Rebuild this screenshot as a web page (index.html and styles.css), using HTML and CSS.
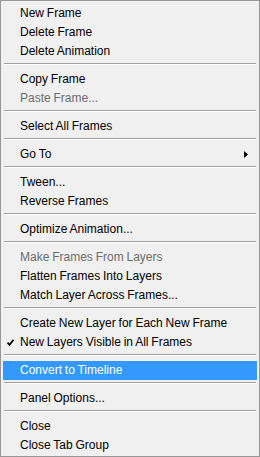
FILE: index.html
```html
<!DOCTYPE html>
<html lang="en">
<head>
    <meta charset="UTF-8">
    <meta name="viewport" content="width=device-width, initial-scale=1.0">
    <title>Animation Panel Menu</title>
    <link rel="stylesheet" href="styles.css">
</head>
<body>
    <ul class="menu">
        <li class="item">New Frame</li>
        <li class="item">Delete Frame</li>
        <li class="item">Delete Animation</li>
        <li class="sep"></li>
        <li class="item">Copy Frame</li>
        <li class="item disabled">Paste Frame...</li>
        <li class="sep"></li>
        <li class="item">Select All Frames</li>
        <li class="sep"></li>
        <li class="item has-sub">Go To
            <svg class="arrow" width="4" height="7" viewBox="0 0 4 7"><path d="M0 0 L4 3.5 L0 7 Z" fill="#000"/></svg>
        </li>
        <li class="sep"></li>
        <li class="item">Tween...</li>
        <li class="item">Reverse Frames</li>
        <li class="sep"></li>
        <li class="item">Optimize Animation...</li>
        <li class="sep"></li>
        <li class="item disabled">Make Frames From Layers</li>
        <li class="item">Flatten Frames Into Layers</li>
        <li class="item">Match Layer Across Frames...</li>
        <li class="sep"></li>
        <li class="item">Create New Layer for Each New Frame</li>
        <li class="item checked">
            <svg class="check" width="7" height="7" viewBox="0 0 7 7"><path d="M0.5 3.5 L2.5 5.8 L6.5 0.8" fill="none" stroke="#000" stroke-width="1.8"/></svg>
            New Layers Visible in All Frames
        </li>
        <li class="sep"></li>
        <li class="item active">Convert to Timeline</li>
        <li class="sep"></li>
        <li class="item">Panel Options...</li>
        <li class="sep"></li>
        <li class="item">Close</li>
        <li class="item">Close Tab Group</li>
    </ul>
</body>
</html>
```

FILE: styles.css
```css
body {
    margin: 0;
    padding: 0;
    background: #f0f0f0;
    font-family: "Liberation Sans", Arial, sans-serif;
    font-size: 12px;
}
.menu {
    list-style: none;
    margin: 0;
    padding: 3px 2px 1px 2px;
    width: 260px;
    height: 457px;
    box-sizing: border-box;
    border: 1px solid #979797;
    background: #f0f0f0;
}
.item {
    position: relative;
    height: 19px;
    line-height: 19px;
    padding-left: 17px;
    color: #000;
    word-spacing: -0.5px;
    white-space: nowrap;
}
.item.disabled {
    color: #6d6d6d;
}
.item.active {
    background: #3399ff;
    color: #fff;
}
.sep {
    height: 9px;
    box-sizing: border-box;
    padding-top: 2px;
}
.sep::before {
    content: "";
    display: block;
    margin: 0 1px;
    height: 1px;
    background: #a0a0a0;
    border-bottom: 1px solid #fff;
}
.arrow {
    position: absolute;
    right: 9px;
    top: 6px;
}
.check {
    position: absolute;
    left: 4px;
    top: 6px;
}
```
